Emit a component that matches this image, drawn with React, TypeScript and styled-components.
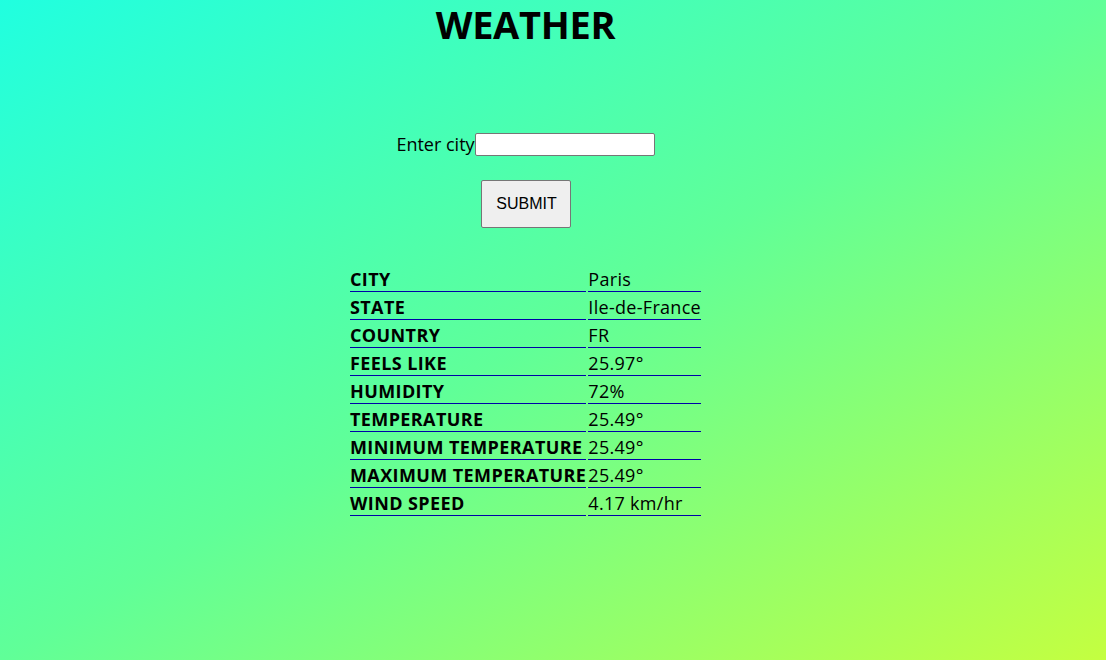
import React from "react";
import styled, { createGlobalStyle } from "styled-components";

const Global = createGlobalStyle`
  html, body { margin: 0; padding: 0; }
  body {
    min-height: 660px;
    background: linear-gradient(to bottom right, #20ffe0 0%, #60ff98 50%, #c4ff40 100%);
    font-family: "Open Sans", "Noto Sans", sans-serif;
    color: #000;
  }
`;

const Page = styled.div`
  width: 1051px;
  min-height: 660px;
  display: flex;
  flex-direction: column;
  align-items: center;
`;

const Title = styled.h1`
  margin: 0;
  padding-top: 2px;
  font-family: "Open Sans", sans-serif;
  font-weight: 700;
  font-size: 38px;
  line-height: 44px;
  letter-spacing: -0.3px;
`;

const Form = styled.form`
  margin-top: 87px;
  display: flex;
  flex-direction: column;
  align-items: center;
`;

const Row = styled.label`
  display: flex;
  align-items: center;
  font-size: 18px;
  line-height: 23px;
`;

const Input = styled.input`
  box-sizing: border-box;
  width: 180px;
  height: 23px;
  border: 1px solid #767676;
  border-radius: 2px;
  background: #fff;
  padding: 1px 2px;
`;

const Button = styled.button`
  margin-top: 24px;
  margin-left: 2px;
  width: 90px;
  height: 48px;
  background: #efefef;
  border: 1px solid #767676;
  border-radius: 2px;
  font-family: "Liberation Sans", Arial, sans-serif;
  font-size: 16px;
  color: #000;
`;

const Table = styled.table`
  margin-top: 36px;
  border-collapse: separate;
  border-spacing: 2px 0;
  font-size: 18px;
`;

const Cell = styled.td<{ $head?: boolean }>`
  padding: 0;
  height: 28px;
  box-sizing: border-box;
  vertical-align: bottom;
  line-height: 24px;
  border-bottom: 1px solid #0000a8;
  font-weight: ${(p) => (p.$head ? 700 : 400)};
  letter-spacing: ${(p) => (p.$head ? "0.4px" : "0.3px")};
  white-space: nowrap;
`;

const rows: [string, string][] = [
  ["CITY", "Paris"],
  ["STATE", "Ile-de-France"],
  ["COUNTRY", "FR"],
  ["FEELS LIKE", "25.97°"],
  ["HUMIDITY", "72%"],
  ["TEMPERATURE", "25.49°"],
  ["MINIMUM TEMPERATURE", "25.49°"],
  ["MAXIMUM TEMPERATURE", "25.49°"],
  ["WIND SPEED", "4.17 km/hr"],
];

export default function App() {
  return (
    <>
      <Global />
      <Page>
        <Title>WEATHER</Title>
        <Form onSubmit={(e) => e.preventDefault()}>
          <Row>
            Enter city
            <Input type="text" />
          </Row>
          <Button type="submit">SUBMIT</Button>
        </Form>
        <Table>
          <tbody>
            {rows.map(([k, v]) => (
              <tr key={k}>
                <Cell $head>{k}</Cell>
                <Cell>{v}</Cell>
              </tr>
            ))}
          </tbody>
        </Table>
      </Page>
    </>
  );
}
